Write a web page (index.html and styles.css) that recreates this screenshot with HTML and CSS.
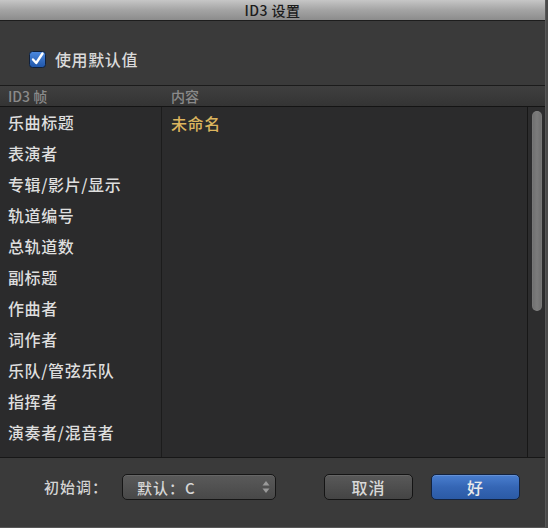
FILE: index.html
```html
<!DOCTYPE html>
<html lang="zh-CN">
<head>
<meta charset="utf-8">
<title>ID3 设置</title>
<link rel="stylesheet" href="styles.css">
</head>
<body>
<div class="window">
  <div class="titlebar">ID3 设置</div>
  <div class="options">
    <label class="check">
      <svg class="box" width="17" height="17" viewBox="0 0 17 17">
        <defs>
          <linearGradient id="cb" x1="0" y1="0" x2="0" y2="1">
            <stop offset="0" stop-color="#4d8ae0"/>
            <stop offset="1" stop-color="#1f55a8"/>
          </linearGradient>
        </defs>
        <rect x="0.5" y="0.5" width="16" height="16" rx="3" fill="url(#cb)" stroke="#10203a"/>
        <path d="M4 8.5 L7.2 12 L13.5 2.5" fill="none" stroke="#fff" stroke-width="2.4" stroke-linecap="round" stroke-linejoin="round"/>
      </svg>
      <span>使用默认值</span>
    </label>
  </div>
  <div class="table">
    <div class="thead">
      <div class="th c1">ID3 帧</div>
      <div class="th c2">内容</div>
    </div>
    <div class="tbody">
      <div class="rows">
        <div class="row"><div class="c1">乐曲标题</div><div class="c2 gold">未命名</div></div>
        <div class="row"><div class="c1">表演者</div><div class="c2"></div></div>
        <div class="row"><div class="c1">专辑/影片/显示</div><div class="c2"></div></div>
        <div class="row"><div class="c1">轨道编号</div><div class="c2"></div></div>
        <div class="row"><div class="c1">总轨道数</div><div class="c2"></div></div>
        <div class="row"><div class="c1">副标题</div><div class="c2"></div></div>
        <div class="row"><div class="c1">作曲者</div><div class="c2"></div></div>
        <div class="row"><div class="c1">词作者</div><div class="c2"></div></div>
        <div class="row"><div class="c1">乐队/管弦乐队</div><div class="c2"></div></div>
        <div class="row"><div class="c1">指挥者</div><div class="c2"></div></div>
        <div class="row"><div class="c1">演奏者/混音者</div><div class="c2"></div></div>
        <div class="row"><div class="c1"></div><div class="c2"></div></div>
      </div>
      <div class="scrollbar"><div class="thumb"></div></div>
    </div>
  </div>
  <div class="footer">
    <span class="label">初始调：</span>
    <div class="popup">
      <span>默认：C</span>
      <svg class="arrows" width="8" height="14" viewBox="0 0 8 14">
        <path d="M4 1 L7.5 5.5 H0.5 Z" fill="#9a9a9a"/>
        <path d="M4 13 L7.5 8.5 H0.5 Z" fill="#9a9a9a"/>
      </svg>
    </div>
    <div class="spacer"></div>
    <button class="btn cancel">取消</button>
    <button class="btn ok">好</button>
  </div>
</div>
</body>
</html>
```
FILE: styles.css
```css
html, body {
  margin: 0;
  padding: 0;
  background: #4a4a4a;
}
body {
  width: 548px;
  height: 528px;
  overflow: hidden;
  font-family: "Noto Sans CJK SC", "Noto Sans", "Liberation Sans", sans-serif;
  font-weight: 500;
}
.window {
  width: 545px;
  height: 527px;
  background: #3a3a3a;
  border-right: 1px solid #575757;
  border-bottom: 1px solid #575757;
  display: flex;
  flex-direction: column;
}
.titlebar {
  height: 20px;
  line-height: 20px;
  text-align: center;
  font-size: 14px;
  color: #1c1c1c;
  background: linear-gradient(#c6c6c6, #a4a4a4 50%, #8c8c8c);
  border-bottom: 1px solid #1d1d1d;
  letter-spacing: 0.5px;
}
.options {
  height: 64px;
  box-sizing: border-box;
  padding: 29px 0 0 29px;
}
.check {
  display: flex;
  align-items: center;
  gap: 9px;
  color: #dadada;
  font-size: 16px;
  letter-spacing: 0.6px;
  line-height: 18px;
}
.box { display: block; }
.table {
  border-top: 1px solid #1b1b1b;
  display: flex;
  flex-direction: column;
}
.thead {
  height: 20px;
  display: flex;
  align-items: center;
  background: linear-gradient(#3f3f3f, #343434);
  border-bottom: 1px solid #141414;
  color: #8a8a8a;
  font-size: 14px;
}
.c1 {
  width: 162px;
  box-sizing: border-box;
  padding-left: 8px;
}
.c2 {
  flex: 1;
  padding-left: 9px;
}
.tbody {
  height: 350px;
  display: flex;
  background: #2b2b2c;
  border-bottom: 1px solid #171717;
  overflow: hidden;
}
.rows {
  width: 527px;
  display: flex;
  flex-direction: column;
}
.row {
  height: 31px;
  flex-shrink: 0;
  display: flex;
  align-items: center;
  color: #dedede;
  font-size: 16px;
  letter-spacing: 0.6px;
}
.row .c1 {
  height: 31px;
  line-height: 30px;
  border-right: 1px solid #1c1c1c;
}
.row .c2 {
  line-height: 30px;
}
.gold { color: #dcb55e; }
.scrollbar {
  width: 17px;
  border-left: 1px solid #171717;
  background: #2d2d2e;
  padding: 4px 0 0 4px;
  box-sizing: border-box;
}
.thumb {
  width: 10px;
  height: 200px;
  border-radius: 5px;
  background: linear-gradient(90deg, #6e6e6e, #7c7c7c 50%, #6e6e6e);
  box-shadow: inset 0 0 0 1px rgba(255,255,255,0.06);
}
.footer {
  flex: 1;
  display: flex;
  align-items: flex-start;
  padding: 16px 25px 0 44px;
  box-sizing: border-box;
}
.label {
  color: #d4d4d4;
  font-size: 15px;
  line-height: 26px;
  letter-spacing: 1px;
  margin-right: 14px;
}
.popup {
  width: 154px;
  height: 26px;
  box-sizing: border-box;
  border: 1px solid #161616;
  border-radius: 5px;
  background: linear-gradient(#5a5a5a, #484848);
  box-shadow: inset 0 1px 0 rgba(255,255,255,0.08);
  display: flex;
  align-items: center;
  justify-content: space-between;
  padding: 0 5px 0 14px;
  color: #d6d6d6;
  font-size: 15px;
  letter-spacing: 1px;
}
.arrows { display: block; }
.spacer { flex: 1; }
.btn {
  height: 26px;
  box-sizing: border-box;
  border-radius: 5px;
  font-family: "Noto Sans CJK SC", "Noto Sans", sans-serif;
  font-weight: 500;
  font-size: 16px;
  letter-spacing: 1px;
  padding: 0;
  line-height: 24px;
}
.cancel {
  width: 89px;
  margin-right: 18px;
  border: 1px solid #141414;
  background: linear-gradient(#595959, #444);
  color: #d8d8d8;
  box-shadow: inset 0 1px 0 rgba(255,255,255,0.08);
}
.ok {
  width: 89px;
  border: 1px solid #13233f;
  background: linear-gradient(#4a7fd0, #3566b5 50%, #2b5aa5);
  color: #eaeaea;
  box-shadow: inset 0 1px 0 rgba(255,255,255,0.15);
}
```
